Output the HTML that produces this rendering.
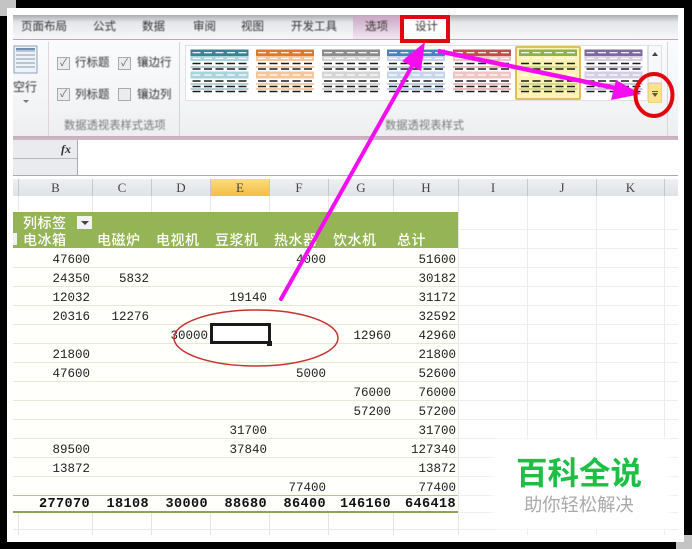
<!DOCTYPE html>
<html><head><meta charset="utf-8">
<style>
html,body{margin:0;padding:0}
body{width:692px;height:549px;position:relative;overflow:hidden;background:#000;font-family:"Liberation Sans","Noto Sans CJK SC",sans-serif}
div{position:absolute}
.t{font-size:11.5px;color:#333;white-space:nowrap;line-height:14px;filter:blur(.4px)}
.n{font-family:"Liberation Mono",monospace;font-size:12.5px;color:#222;line-height:14px;text-align:right;width:60px;filter:blur(.35px)}
.b{font-weight:bold;color:#111;font-size:13.5px;letter-spacing:.4px}
.h{font-size:14px;color:#fff;line-height:16px;white-space:nowrap;letter-spacing:.5px;font-family:"Noto Sans CJK SC","Liberation Sans",sans-serif;font-weight:500;filter:blur(.35px)}
.c{font-family:"Liberation Serif",serif;font-size:13px;color:#444;line-height:17px;text-align:center;top:179px;height:17px;background:linear-gradient(#eef0f2,#dfe2e6);border-right:1px solid #c4c7cc;box-sizing:border-box;filter:blur(.25px)}
.v{top:196px;width:1px;height:16px;background:#e8e8e8}
.u{top:513px;width:1px;height:22px;background:#e4e4e4}
.l{left:13px;width:445px;height:1px;background:#e8e8d4}
.g{height:1px;left:458px;width:220px;background:#efefef}
.cb{width:11px;height:11px;border:1px solid #aaa;background:#ececec;font-size:10px;line-height:11px;text-align:center;color:#666}
</style></head><body>

<div style="left:0;top:0;width:16px;height:16px;background:#c4c4c4"></div>
<div style="left:7px;top:8px;width:677px;height:534px;background:#fff"></div>
<div style="left:676px;top:542px;width:16px;height:7px;background:#c4c4c4"></div>
<div style="left:684px;top:535px;width:8px;height:8px;background:#c4c4c4"></div>

<!-- tab bar -->
<div style="left:13px;top:15px;width:665px;height:24px;background:linear-gradient(#a9acb1 0,#e4e6ea 30%,#f6f7f9 100%)"></div>
<div style="left:353px;top:16px;width:47px;height:23px;background:linear-gradient(#c9a8c4,#f3e6f1)"></div>
<div style="left:400px;top:15px;width:49px;height:26px;background:#fff"></div>
<div style="left:13px;top:39px;width:665px;height:1px;background:#c9a0b8"></div>
<div class="t" style="left:21px;top:20px">页面布局</div>
<div class="t" style="left:93px;top:20px">公式</div>
<div class="t" style="left:142px;top:20px">数据</div>
<div class="t" style="left:193px;top:20px">审阅</div>
<div class="t" style="left:241px;top:20px">视图</div>
<div class="t" style="left:291px;top:20px">开发工具</div>
<div class="t" style="left:365px;top:20px">选项</div>
<div class="t" style="left:415px;top:20px">设计</div>

<!-- ribbon -->
<div style="left:13px;top:40px;width:665px;height:96px;background:linear-gradient(#fafbfc 0,#f3f4f6 70%,#eceef0 100%)"></div>
<div style="left:48px;top:42px;width:1px;height:94px;background:#e3d3dd"></div>
<div style="left:179px;top:42px;width:1px;height:94px;background:#d8d3d8"></div>
<div style="left:667px;top:42px;width:1px;height:94px;background:#d8d8dc"></div>
<div style="left:13px;top:136px;width:665px;height:4px;background:linear-gradient(#d0a8bf,#c9bcc4)"></div>

<svg style="position:absolute;left:13px;top:45px" width="26" height="30">
<rect x="1" y="1" width="23" height="27" fill="#eef3f9" stroke="#8ea2b8"/>
<g stroke="#8b98a8" stroke-width="1"><path d="M3 6H22M3 10H22M3 14H22M3 18H22M3 22H22"/></g>
<path d="M3 4H22" stroke="#6d8fb5" stroke-width="2"/>
</svg>
<div class="t" style="left:13px;top:80px;font-size:12px">空行</div>
<div style="left:23px;top:100px;width:0;height:0;border:3px solid transparent;border-top:3px solid #777"></div>

<div class="cb" style="left:57px;top:57px">✓</div>
<div class="t" style="left:75px;top:56px">行标题</div>
<div class="cb" style="left:118px;top:57px">✓</div>
<div class="t" style="left:137px;top:56px">镶边行</div>
<div class="cb" style="left:57px;top:88px">✓</div>
<div class="t" style="left:75px;top:88px">列标题</div>
<div class="cb" style="left:118px;top:88px"></div>
<div class="t" style="left:137px;top:88px">镶边列</div>
<div class="t" style="left:64px;top:119px;color:#777;font-size:11.3px">数据透视表样式选项</div>
<div class="t" style="left:385px;top:119px;color:#777;font-size:11.3px">数据透视表样式</div>

<!-- gallery -->
<div style="left:185px;top:45px;width:463px;height:56px;background:#fff;border:1px solid #dfe1e4;box-sizing:border-box"></div>
<div style="left:515px;top:46px;width:66px;height:54px;background:#fdf3b4;border:2px solid #e0bd5a;border-radius:2px;box-sizing:border-box"></div>
<div style="left:648px;top:45px;width:14px;height:38px;background:#f7f8f9;border:1px solid #dfe1e4;box-sizing:border-box"></div>
<div style="left:652px;top:52px;width:0;height:0;border:3px solid transparent;border-bottom:4px solid #444;border-top:0"></div>
<div style="left:648px;top:83px;width:14px;height:20px;background:#fbe28f;border:1px solid #ecd27f;box-sizing:border-box"></div>
<div style="left:652px;top:91px;width:6px;height:1px;background:#555"></div>
<div style="left:652px;top:93px;width:0;height:0;border:3px solid transparent;border-top:4px solid #555;border-bottom:0"></div>

<svg style="position:absolute;left:0;top:0;filter:blur(.35px)" width="692" height="549">
<defs>
<g id="th">
<rect width="58" height="6.5" y="0" fill="var(--d)"/>
<rect width="58" height="5" y="6.5" fill="var(--m)"/>
<rect width="58" height="7" y="22" fill="var(--m)"/>
<path d="M0 17.5H58M0 34.5H58M0 39.5H58" stroke="var(--d)" stroke-width="1" opacity=".75"/>
<g stroke="#fff" stroke-width="1.2" stroke-dasharray="8 3.5" fill="none"><path d="M2 3.2H58M2 8.8H58M2 25.5H58"/></g>
<g stroke="#1c1c1c" stroke-width="1.4" stroke-dasharray="8 3.5" fill="none"><path d="M2 14H58M2 19.5H58M2 31.5H58M2 37H58M2 42H58"/></g>
</g>
</defs>
<use href="#th" x="190.500" y="49.500" style="--d:#3d8294;--m:#a9d3dd"/>
<use href="#th" x="256" y="49.500" style="--d:#de7a26;--m:#f7c59a"/>
<use href="#th" x="322" y="49.500" style="--d:#8c8c8c;--m:#d4d4d4"/>
<use href="#th" x="387" y="49.500" style="--d:#4f81bd;--m:#c5d6ec"/>
<use href="#th" x="453" y="49.500" style="--d:#c0504d;--m:#eec5c4"/>
<use href="#th" x="519" y="49.500" style="--d:#8db050;--m:#fdf3b4"/>
<use href="#th" x="584.500" y="49.500" style="--d:#7d68a0;--m:#d5cde4"/>
</svg>

<!-- formula bar -->
<div style="left:13px;top:140px;width:65px;height:36px;background:#e9ebee"></div>
<div style="left:13px;top:158px;width:65px;height:1px;background:#b5b8bc"></div>
<div style="left:77px;top:140px;width:1px;height:36px;background:#a8abb0"></div>
<div style="left:13px;top:175px;width:665px;height:1px;background:#a8abb0"></div>
<div style="left:61px;top:142px;font:italic bold 12px 'Liberation Serif',serif;color:#333;line-height:14px">fx</div>

<!-- column headers -->
<div class="c" style="left:13px;width:6px"></div>
<div class="c" style="left:19px;width:74px">B</div>
<div class="c" style="left:93px;width:59px">C</div>
<div class="c" style="left:152px;width:59px">D</div>
<div class="c" style="left:211px;width:59px;background:linear-gradient(#fbdc7e,#f4bd45)">E</div>
<div class="c" style="left:270px;width:59px">F</div>
<div class="c" style="left:329px;width:65px">G</div>
<div class="c" style="left:394px;width:65px">H</div>
<div class="c" style="left:459px;width:69px">I</div>
<div class="c" style="left:528px;width:69px">J</div>
<div class="c" style="left:597px;width:68px">K</div>
<div class="c" style="left:665px;width:13px;border-right:0"></div>
<div class="v" style="left:18px"></div><div class="v" style="left:92px"></div><div class="v" style="left:151px"></div><div class="v" style="left:210px"></div><div class="v" style="left:269px"></div><div class="v" style="left:328px"></div><div class="v" style="left:393px"></div>

<!-- grid below the table -->
<div class="u" style="left:18px"></div><div class="u" style="left:92px"></div><div class="u" style="left:151px"></div><div class="u" style="left:210px"></div><div class="u" style="left:269px"></div><div class="u" style="left:328px"></div><div class="u" style="left:393px"></div>
<div style="left:13px;top:529px;width:445px;height:1px;background:#e8e8e8"></div>

<!-- right grid -->
<div style="left:458px;top:196px;width:1px;height:339px;background:#e6e6e6"></div>
<div style="left:527px;top:196px;width:1px;height:339px;background:#ececec"></div>
<div style="left:596px;top:196px;width:1px;height:339px;background:#ececec"></div>
<div style="left:664px;top:196px;width:1px;height:339px;background:#ececec"></div>
<div class="g" style="top:229px"></div><div class="g" style="top:248px"></div><div class="g" style="top:267px"></div><div class="g" style="top:286px"></div><div class="g" style="top:305px"></div><div class="g" style="top:324px"></div><div class="g" style="top:343px"></div><div class="g" style="top:362px"></div><div class="g" style="top:381px"></div><div class="g" style="top:400px"></div><div class="g" style="top:419px"></div><div class="g" style="top:438px"></div><div class="g" style="top:457px"></div><div class="g" style="top:476px"></div><div class="g" style="top:495px"></div><div class="g" style="top:512px"></div><div class="g" style="top:529px"></div>

<!-- table -->
<div style="left:13px;top:248px;width:445px;height:264px;background:#fffffb"></div>
<div style="left:13px;top:212px;width:445px;height:36px;background:#94b455"></div>
<div style="left:13px;top:233px;width:4px;height:12px;background:#f1f1f1"></div>
<div class="h" style="left:23px;top:215px">列标签</div>
<div style="left:77px;top:216px;width:15px;height:13px;background:#f2f2f2"></div>
<div style="left:81px;top:221px;width:0;height:0;border:4px solid transparent;border-top:4px solid #444;border-bottom:0"></div>
<div class="h" style="left:23px;top:232px">电冰箱</div>
<div class="h" style="left:97px;top:232px">电磁炉</div>
<div class="h" style="left:156px;top:232px">电视机</div>
<div class="h" style="left:215px;top:232px">豆浆机</div>
<div class="h" style="left:274px;top:232px">热水器</div>
<div class="h" style="left:333px;top:232px">饮水机</div>
<div class="h" style="left:397px;top:232px">总计</div>

<div class="l" style="top:267px"></div><div class="l" style="top:286px"></div><div class="l" style="top:305px"></div><div class="l" style="top:324px"></div><div class="l" style="top:343px"></div><div class="l" style="top:362px"></div><div class="l" style="top:381px"></div><div class="l" style="top:400px"></div><div class="l" style="top:419px"></div><div class="l" style="top:438px"></div><div class="l" style="top:457px"></div><div class="l" style="top:476px"></div>
<div class="l" style="top:495px;background:#b5c08f"></div>
<div class="l" style="top:511px;height:2px;background:#8ba45a"></div>

<div class="n" style="left:30px;top:253px">47600</div><div class="n" style="left:266px;top:253px">4000</div><div class="n" style="left:396px;top:253px">51600</div>
<div class="n" style="left:30px;top:272px">24350</div><div class="n" style="left:89px;top:272px">5832</div><div class="n" style="left:396px;top:272px">30182</div>
<div class="n" style="left:30px;top:291px">12032</div><div class="n" style="left:207px;top:291px">19140</div><div class="n" style="left:396px;top:291px">31172</div>
<div class="n" style="left:30px;top:310px">20316</div><div class="n" style="left:89px;top:310px">12276</div><div class="n" style="left:396px;top:310px">32592</div>
<div class="n" style="left:148px;top:329px">30000</div><div class="n" style="left:331px;top:329px">12960</div><div class="n" style="left:396px;top:329px">42960</div>
<div class="n" style="left:30px;top:348px">21800</div><div class="n" style="left:396px;top:348px">21800</div>
<div class="n" style="left:30px;top:367px">47600</div><div class="n" style="left:266px;top:367px">5000</div><div class="n" style="left:396px;top:367px">52600</div>
<div class="n" style="left:331px;top:386px">76000</div><div class="n" style="left:396px;top:386px">76000</div>
<div class="n" style="left:331px;top:405px">57200</div><div class="n" style="left:396px;top:405px">57200</div>
<div class="n" style="left:207px;top:424px">31700</div><div class="n" style="left:396px;top:424px">31700</div>
<div class="n" style="left:30px;top:443px">89500</div><div class="n" style="left:207px;top:443px">37840</div><div class="n" style="left:396px;top:443px">127340</div>
<div class="n" style="left:30px;top:462px">13872</div><div class="n" style="left:396px;top:462px">13872</div>
<div class="n" style="left:266px;top:481px">77400</div><div class="n" style="left:396px;top:481px">77400</div>
<div class="n b" style="left:30px;top:498px">277070</div><div class="n b" style="left:89px;top:498px">18108</div><div class="n b" style="left:148px;top:498px">30000</div><div class="n b" style="left:207px;top:498px">88680</div><div class="n b" style="left:266px;top:498px">86400</div><div class="n b" style="left:331px;top:498px">146160</div><div class="n b" style="left:396px;top:498px">646418</div>

<!-- selection -->
<div style="left:210px;top:323px;width:61px;height:21px;border:3px solid #1a1a1a;box-sizing:border-box;background:#fff"></div>
<div style="left:267px;top:341px;width:5px;height:5px;background:#1a1a1a"></div>

<!-- watermark -->
<div style="left:495px;top:441px;width:172px;height:86px;background:#fff;box-shadow:0 0 6px 2px #fff"></div>
<div style="left:516px;top:455px;font-size:31.500px;line-height:36px;color:#1fbf45;font-weight:bold;white-space:nowrap">百科全说</div>
<div style="left:524px;top:494px;font-size:18.300px;line-height:22px;color:#aaa;white-space:nowrap">助你轻松解决</div>

<!-- annotations -->
<svg style="position:absolute;left:0;top:0" width="692" height="549">
<ellipse cx="256" cy="338" rx="82" ry="28" fill="none" stroke="#c8322e" stroke-width="1.500"/>
<path d="M281 299L412 66" stroke="#f50cf0" stroke-width="4" stroke-linecap="round" fill="none"/>
<path d="M425 42L421 71L402 61Z" fill="#f50cf0"/>
<path d="M438 51L620 89" stroke="#f50cf0" stroke-width="4.500" fill="none"/>
<path d="M641 94L611 100L616 80Z" fill="#f50cf0"/>
<rect x="402" y="17" width="46" height="24" fill="none" stroke="#e0070f" stroke-width="4"/>
<ellipse cx="654" cy="95" rx="18.500" ry="21" fill="none" stroke="#e0070f" stroke-width="4"/>
</svg>
</body></html>
